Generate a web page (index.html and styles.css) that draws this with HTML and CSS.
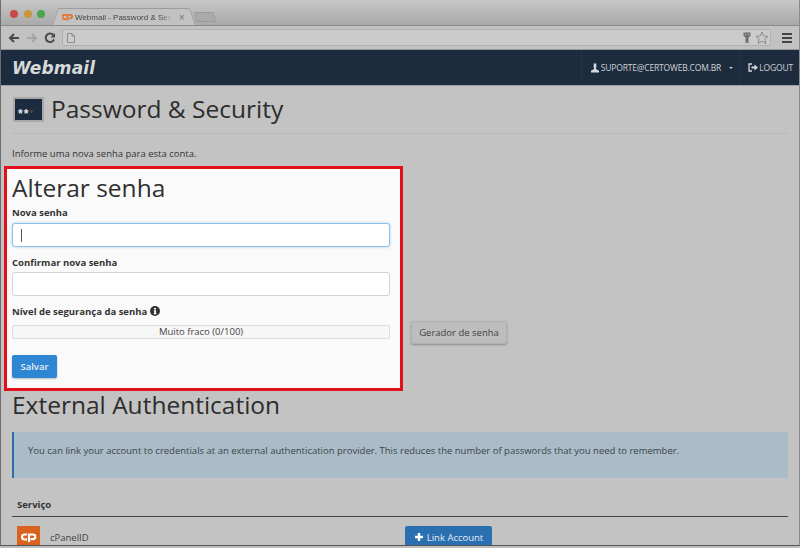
FILE: index.html
```html
<!DOCTYPE html>
<html lang="pt">
<head>
<meta charset="utf-8">
<title>Webmail - Password &amp; Security</title>
<link rel="stylesheet" href="styles.css">
</head>
<body>
<div class="window">
  <div class="tabstrip">
    <div class="lights"><i class="light red"></i><i class="light yellow"></i><i class="light green"></i></div>
    <div class="tab">
      <svg class="tab-logo" width="11" height="8" viewBox="0 0 13 8"><path d="M5 1.500H3a2.500 2.500 0 0 0 0 5h2M6.500 8V1.500h3.500a2 2 0 0 1 0 4H8" fill="none" stroke="#e8702a" stroke-width="2"/></svg>
      <span class="tab-title">Webmail - Password &amp; Sec</span>
      <span class="tab-close">×</span>
    </div>
    <div class="newtab"></div>
  </div>
  <div class="toolbar">
    <svg class="nav" width="12" height="12" viewBox="0 0 12 12"><path d="M11 6H2M6 2 2 6l4 4" fill="none" stroke="#4a4a4a" stroke-width="2"/></svg>
    <svg class="nav" width="12" height="12" viewBox="0 0 12 12"><path d="M1 6h9M6 2l4 4-4 4" fill="none" stroke="#a4a4a4" stroke-width="2"/></svg>
    <svg class="nav" width="12" height="12" viewBox="0 0 12 12"><path d="M10 7.500A4.300 4.300 0 1 1 9.300 3" fill="none" stroke="#4a4a4a" stroke-width="2"/><path d="M11 1v4.500H6.500z" fill="#4a4a4a"/></svg>
    <div class="omnibox">
      <svg width="8" height="10" viewBox="0 0 8 10"><path d="M.5.500h4.500l2.500 2.500v6.500h-7zM5 .5V3h2.500" fill="none" stroke="#8c8c8c"/></svg>
      <div class="omni-right">
        <svg width="8" height="12" viewBox="0 0 8 12"><path d="M.5.500h7V4l-2 1.200V11.500L4 10.500 2.500 11.500V5.200L.5 4z" fill="#6e6e6e"/><path d="M2 2h1v1H2zM5 2h1v1H5z" fill="#c8c8c8"/></svg>
        <svg width="14" height="14" viewBox="0 0 14 14"><path d="m7 1 1.800 4 4.200.4-3.200 2.800 1 4.300L7 10.200 3.200 12.500l1-4.300L1 5.400 5.200 5z" fill="none" stroke="#8a8a8a"/></svg>
      </div>
    </div>
    <div class="menu"><i></i><i></i><i></i></div>
  </div>
  <header class="topbar">
    <span class="brand">Webmail</span>
    <nav class="topnav">
      <span class="nav-item user">
        <svg width="8" height="10" viewBox="0 0 9 10"><path d="M3 0h3v4L5.500 6 9 8v2H0V8l3.500-2L3 4z" fill="#d5d8db"/></svg>
        <span class="user-mail">SUPORTE@CERTOWEB.COM.BR</span>
        <i class="caret"></i>
      </span>
      <span class="nav-item logout">
        <svg width="10" height="9" viewBox="0 0 10 9"><path d="M4 1H1v7h3" fill="none" stroke="#d5d8db" stroke-width="1.300"/><path d="M3.500 3.500h3V1.500L10 4.500l-3.500 3v-2h-3z" fill="#d5d8db"/></svg>
        <span class="logout-text">LOGOUT</span>
      </span>
    </nav>
  </header>
  <main class="content">
    <div class="page-head">
      <div class="page-icon"><span>**</span><i class="dot"></i></div>
      <h1>Password &amp; Security</h1>
    </div>
    <p class="intro">Informe uma nova senha para esta conta.</p>
    <div class="form-row">
      <form class="highlight">
        <h2>Alterar senha</h2>
        <label>Nova senha</label>
        <div class="input focus"><i class="cursor"></i></div>
        <label class="second">Confirmar nova senha</label>
        <div class="input"></div>
        <label class="third">Nível de segurança da senha <svg class="info" width="10" height="10" viewBox="0 0 10 10"><circle cx="5" cy="5" r="5" fill="#333"/><path d="M4 2h2v1.500H4zM3.800 4.300H6v2.900h.6V8.200H3.600V7.200h.6V5.300h-.4z" fill="#fff"/></svg></label>
        <div class="meter">Muito fraco (0/100)</div>
        <button type="button" class="btn primary">Salvar</button>
      </form>
      <button type="button" class="btn default">Gerador de senha</button>
    </div>
    <h2 class="ext">External Authentication</h2>
    <div class="callout">You can link your account to credentials at an external authentication provider. This reduces the number of passwords that you need to remember.</div>
    <div class="table-head">Serviço</div>
    <div class="service">
      <div class="svc-name">
        <div class="svc-logo"><svg width="16" height="9" viewBox="0 0 16 9"><path d="M6 1.500H3.500a2.500 2.500 0 0 0 0 5H6M8 9V1.500h4a2.300 2.300 0 0 1 0 4.600H9.500" fill="none" stroke="#fff" stroke-width="2.200"/></svg></div>
        <span>cPanelID</span>
      </div>
      <button type="button" class="btn primary link"><svg width="10" height="10" viewBox="0 0 10 10"><path d="M5 1v8M1 5h8" stroke="#fff" stroke-width="2.400"/></svg> Link Account</button>
    </div>
  </main>
</div>
</body>
</html>
```
FILE: styles.css
```css
* { box-sizing: border-box; }
html, body { margin: 0; padding: 0; height: 100%; overflow: hidden; background: #bdbdbd; }
body { font-family: "Open Sans", sans-serif; color: #333; }
.window {
  width: 800px; height: 546px; overflow: hidden;
  background: #c3c3c3; border-left: 1px solid #6d6d6d; border-right: 1px solid #8c8c8c;
  border-bottom: 1px solid #555; display: flex; flex-direction: column;
}
.tabstrip {
  height: 26px; flex: none; display: flex; align-items: flex-end;
  background: linear-gradient(#c7c7c7, #a9a9a9); border-bottom: 1px solid #8a8a8a;
  padding-left: 9px; position: relative;
}
.lights { display: flex; gap: 5.500px; align-self: flex-start; margin-top: 10px; }
.light { width: 8px; height: 8px; border-radius: 50%; display: block; }
.red { background: #c9484a; } .yellow { background: #c9973a; } .green { background: #4ba54a; }
.tab {
  margin-left: 14px; width: 130px; height: 17px; background: #c2c2c2; border-top: 1px solid #9c9c9c;
  display: flex; align-items: center; gap: 2px; position: relative;
  padding-left: 3px; font: 8px "Liberation Sans", sans-serif; color: #444; white-space: nowrap;
}
.tab::before, .tab::after {
  content: ""; position: absolute; top: -1px; bottom: 0; width: 7px; background: #c2c2c2;
  border-top: 1px solid #9c9c9c;
}
.tab::before { left: -4px; transform: skewX(-18deg); border-left: 1px solid #9c9c9c; border-top-left-radius: 2px; }
.tab::after { right: -4px; transform: skewX(18deg); border-right: 1px solid #9c9c9c; border-top-right-radius: 2px; }
.tab-logo, .tab-title, .tab-close { position: relative; z-index: 1; }
.tab-logo { flex: none; }
.tab-title { flex: none; -webkit-mask-image: linear-gradient(90deg, #000 88%, transparent); mask-image: linear-gradient(90deg, #000 88%, transparent); }
.tab-close { margin-left: 5px; font-size: 10px; color: #777; }
.newtab { width: 20px; height: 10px; margin: 0 0 3px 6px; background: #aaa; border: 1px solid #9a9a9a; border-radius: 2px; transform: skewX(12deg); }
.toolbar {
  height: 24px; flex: none; background: #c2c2c2; display: flex; align-items: center; gap: 5px; padding: 0 3px 0 7px;
  border-bottom: 1px solid #999;
}
.nav { flex: none; margin-right: 1px; }
.omnibox {
  flex: 1; height: 17px; background: #cbcbcb; border: 1px solid #b0b0b0; border-radius: 2px;
  display: flex; align-items: center; padding: 0 1px 0 4px;
}
.omni-right { margin-left: auto; display: flex; gap: 4px; align-items: center; }
.menu { width: 10px; margin: 0 4px 0 6px; display: flex; flex-direction: column; gap: 2px; }
.menu i { display: block; height: 2px; background: #444; }
.topbar {
  height: 36px; flex: none; background: #1c2c3e; display: flex; align-items: center; justify-content: space-between;
  border-bottom: 1px solid #99a0a6;
}
.brand { margin-left: 11px; font: italic bold 17px "DejaVu Sans", sans-serif; color: #d6d8da; letter-spacing: .15px; }
.topnav { display: flex; height: 100%; font-size: 8.500px; color: #ced2d6; }
.nav-item { display: flex; align-items: center; gap: 2px; height: 100%; }
.user { padding: 0 6px 0 9px; border-left: 1px solid #22344a; }
.user-mail { letter-spacing: -.17px; }
.logout-text { letter-spacing: -.15px; }
.caret { margin-left: 6px; width: 0; height: 0; border: 2.500px solid transparent; border-top-color: #ced2d6; border-bottom: 0; display: block; }
.logout { padding: 0 6px 0 8px; border-left: 1px solid #22344a; gap: 1px; }
.content { flex: 1; padding: 0 11px; min-height: 0; overflow: hidden; }
.page-head {
  display: flex; align-items: center; height: 48px; gap: 7px; border-bottom: 1px solid #b8b8b8; padding-left: 1px;
}
.page-icon {
  width: 31px; height: 25px; background: #1c2c3e; border: 2px solid #a8a8a8; color: #e4e4e4;
  display: flex; align-items: center; padding-left: 3px; font: bold 12px "Liberation Sans", sans-serif; letter-spacing: 1px;
}
.page-icon span { line-height: 1; margin-top: 9px; }
.dot { display: block; width: 3px; height: 3px; margin: 4px 0 0 1px; border-radius: 50%; background: #3d4c5c; }
h1 { margin: 0; font-weight: 400; font-size: 24.500px; color: #2d2d2d; line-height: 1; }
.intro { margin: 13px 0 0; font-size: 9.500px; line-height: 14px; }
.form-row { display: flex; align-items: flex-start; margin-left: -8px; margin-top: 5px; }
.highlight {
  width: 399px; height: 225px; background: #fafafa; border: 3px solid #e0101c; padding: 0 10px 0 5px;
  display: flex; flex-direction: column; flex: none;
}
.highlight h2 { margin: 2px 0 0; font-size: 24.500px; font-weight: 400; line-height: 33px; color: #2f2f2f; }
label { font-size: 9.500px; font-weight: 700; line-height: 14px; display: block; margin-top: 2px; }
.input { height: 24px; margin-top: 3px; background: #fff; border: 1px solid #d4d4d4; border-radius: 3px; display: flex; align-items: center; padding-left: 8px; }
.input.focus { border-color: #8fc0e6; box-shadow: 0 0 3px #a8d0ee; }
.cursor { display: block; width: 1px; height: 13px; background: #555; }
.second { margin-top: 9px; margin-bottom: -1px; }
.third { margin-top: 9px; }
.info { vertical-align: -1px; }
.meter { margin-top: 6px; height: 14px; border: 1px solid #dedede; border-radius: 2px; background: #f7f7f7; text-align: center; font-size: 9.500px; line-height: 12px; color: #444; }
.btn { font-family: "Open Sans", sans-serif; font-size: 9.500px; border-radius: 2px; border: 0; padding: 0; }
.primary { background: #2f86d3; color: #e6edf4; box-shadow: 0 1px 2px #bbb; font-weight: 600; }
.highlight .primary { width: 45px; height: 23px; margin-top: 16px; }
.default { margin: 155px 0 0 8px; width: 96px; height: 23px; background: #bdbdbd; color: #444; box-shadow: 0 1px 2px #8e8e8e; border: 1px solid #b0b0b0; }
.ext { margin: -1px 0 0; font-size: 24.500px; font-weight: 400; line-height: 30px; color: #2d2d2d; }
.callout { margin-top: 12px; height: 46px; background: #a9bcc8; border-left: 2px solid #2e6ea6; padding-left: 14px; font-size: 9.500px; line-height: 38px; white-space: nowrap; color: #3d4448; }
.table-head { margin-top: 16px; padding: 0 0 0 5px; font-size: 9.500px; font-weight: 700; line-height: 22px; height: 23px; border-bottom: 1px solid #444; }
.service { display: flex; align-items: flex-start; padding-top: 9px; }
.svc-name { width: 393px; padding-left: 5px; display: flex; align-items: center; gap: 10px; font-size: 9.500px; color: #444; }
.svc-logo { width: 23px; height: 23px; background: #d9621f; display: flex; align-items: center; justify-content: center; }
.link { width: 87px; height: 22px; background: #2a6fb0; display: flex; align-items: center; justify-content: center; gap: 3px; font-weight: 400; box-shadow: none; }
```
